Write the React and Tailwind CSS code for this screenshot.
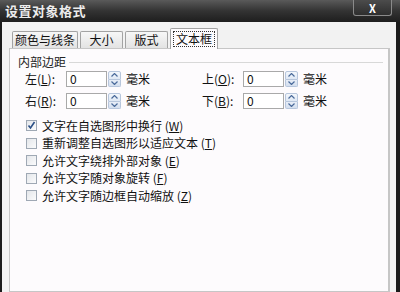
import React from "react";

const font = { fontFamily: '"Noto Sans CJK SC", "Liberation Sans", sans-serif' };

function Spinner() {
  return (
    <div className="flex flex-col w-[13px] h-[16px] ml-px">
      <div className="flex-1 flex items-center justify-center border border-[#b7c6dc] bg-gradient-to-b from-[#f3f7fc] to-[#dfe8f4] rounded-t-[2px]">
        <svg width="7" height="4" viewBox="0 0 7 4">
          <path d="M0.5 3.5 L3.5 0.5 L6.5 3.5" fill="none" stroke="#4a6a9a" strokeWidth="1.2" />
        </svg>
      </div>
      <div className="flex-1 flex items-center justify-center border border-t-0 border-[#b7c6dc] bg-gradient-to-b from-[#e8eef7] to-[#d4dfee] rounded-b-[2px]">
        <svg width="7" height="4" viewBox="0 0 7 4">
          <path d="M0.5 0.5 L3.5 3.5 L6.5 0.5" fill="none" stroke="#4a6a9a" strokeWidth="1.2" />
        </svg>
      </div>
    </div>
  );
}

function Field({ name, keyChar }) {
  return (
    <div className="flex items-center h-[16px]">
      <span className="w-[41px] text-[12px] leading-none whitespace-nowrap">
        {name}(<u>{keyChar}</u>):
      </span>
      <div className="w-[41px] h-[16px] border border-[#a9a9a9] bg-white text-[12px] leading-[14px] pl-[3px]">0</div>
      <Spinner />
      <span className="ml-[5px] text-[12px] leading-none">毫米</span>
    </div>
  );
}

function Check({ checked, label, keyChar }) {
  return (
    <div className="flex items-center h-[17.5px]">
      <div className="w-[11px] h-[11px] border border-[#9fa8b4] bg-gradient-to-br from-[#e4e6ea] to-[#fbfbfc] flex items-center justify-center">
        {checked && (
          <svg width="9" height="9" viewBox="0 0 9 9">
            <path d="M1.5 4.5 L3.5 7 L7.5 1" fill="none" stroke="#2b4f86" strokeWidth="1.6" />
          </svg>
        )}
      </div>
      <span className="ml-[5px] text-[12px] leading-none whitespace-nowrap">
        {label} (<u>{keyChar}</u>)
      </span>
    </div>
  );
}

export default function App() {
  const tabs = ["颜色与线条", "大小", "版式"];
  const widths = ["w-[66px]", "w-[43px]", "w-[43px]"];
  return (
    <div className="w-[400px] h-[292px] overflow-hidden bg-[#1b1b1b] flex flex-col text-[#111]" style={font}>
      <div className="h-[22px] shrink-0 flex items-start justify-between bg-gradient-to-b from-[#5a5a5a] via-[#333] to-[#1e1e1e] pl-[5px] pr-[8px]">
        <span className="mt-[4px] text-[13px] leading-none font-bold text-[#ececec] tracking-[0.5px]">设置对象格式</span>
        <div className="w-[39px] h-[16px] rounded-b-[3px] border border-t-0 border-[#8a8a8a] bg-gradient-to-b from-[#4c4c4c] to-[#2e2e2e] flex items-center justify-center">
          <span className="text-[11px] leading-[12px] font-bold text-white">X</span>
        </div>
      </div>
      <div className="flex-1 ml-[2px] mr-[4px] bg-[#f2f2f2] pl-[7px] pr-[6px] pt-[6px] flex flex-col">
        <div className="flex items-end pl-[3px] gap-[2px] h-[20px] relative z-10">
          {tabs.map((t, i) => (
            <div
              key={t}
              className={`${widths[i]} h-[17px] flex items-center justify-center border border-b-0 border-[#a3a3a3] rounded-t-[2px] bg-gradient-to-b from-[#f7f7f7] to-[#e3e3e3] text-[12px] leading-none`}
            >
              {t}
            </div>
          ))}
          <div className="w-[48px] h-[21px] flex items-center justify-center border border-b-0 border-[#a3a3a3] rounded-t-[2px] bg-[#fdfbfd] -mb-px">
            <span className="text-[12px] leading-none px-[2px] py-[1px] outline outline-1 outline-dotted outline-[#333]">文本框</span>
          </div>
        </div>
        <div className="flex-1 border border-[#c6c6c6] border-r-[2px] bg-[#fdfbfd] pl-[8px] pr-[5px] pt-[7px]">
          <div className="flex items-center">
            <span className="text-[12px] leading-none text-[#222]">内部边距</span>
            <div className="flex-1 ml-[3px] h-px bg-[#d8d8d8]" />
          </div>
          <div className="pl-[7px] mt-[3px] grid grid-cols-[177px_auto] gap-y-[6px]">
            <Field name="左" keyChar="L" />
            <Field name="上" keyChar="O" />
            <Field name="右" keyChar="R" />
            <Field name="下" keyChar="B" />
          </div>
          <div className="pl-[8px] mt-[8px] flex flex-col">
            <Check checked label="文字在自选图形中换行" keyChar="W" />
            <Check label="重新调整自选图形以适应文本" keyChar="T" />
            <Check label="允许文字绕排外部对象" keyChar="E" />
            <Check label="允许文字随对象旋转" keyChar="F" />
            <Check label="允许文字随边框自动缩放" keyChar="Z" />
          </div>
        </div>
      </div>
    </div>
  );
}
